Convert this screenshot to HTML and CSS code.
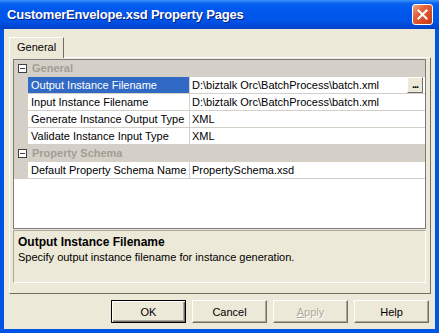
FILE: index.html
```html
<!DOCTYPE html>
<html lang="en">
<head>
    <meta charset="UTF-8">
    <title>CustomerEnvelope.xsd Property Pages</title>
    <link rel="stylesheet" href="styles.css">
</head>
<body>
    <div class="window">
        <div class="titlebar">
            <span class="title">CustomerEnvelope.xsd Property Pages</span>
            <div class="close">
                <svg viewBox="0 0 21 21" xmlns="http://www.w3.org/2000/svg">
                    <path d="M6 6L15 15M15 6L6 15" stroke="#fff" stroke-width="2.2" stroke-linecap="square"/>
                </svg>
            </div>
        </div>

        <div class="client">
            <div class="tabs">
                <div class="tab active">General</div>
            </div>

            <div class="tab-panel">
                <div class="grid">
                    <div class="row category">
                        <div class="gutter"><span class="toggle"></span></div>
                        <div class="cat-label">General</div>
                    </div>
                    <div class="row">
                        <div class="gutter"></div>
                        <div class="name selected">Output Instance Filename</div>
                        <div class="value">
                            <span>D:\biztalk Orc\BatchProcess\batch.xml</span>
                            <span class="dots">...</span>
                        </div>
                    </div>
                    <div class="row">
                        <div class="gutter"></div>
                        <div class="name">Input Instance Filename</div>
                        <div class="value">D:\biztalk Orc\BatchProcess\batch.xml</div>
                    </div>
                    <div class="row">
                        <div class="gutter"></div>
                        <div class="name">Generate Instance Output Type</div>
                        <div class="value">XML</div>
                    </div>
                    <div class="row">
                        <div class="gutter"></div>
                        <div class="name">Validate Instance Input Type</div>
                        <div class="value">XML</div>
                    </div>
                    <div class="row category">
                        <div class="gutter"><span class="toggle"></span></div>
                        <div class="cat-label">Property Schema</div>
                    </div>
                    <div class="row">
                        <div class="gutter"></div>
                        <div class="name">Default Property Schema Name</div>
                        <div class="value">PropertySchema.xsd</div>
                    </div>
                </div>

                <div class="help-box">
                    <div class="help-title">Output Instance Filename</div>
                    <div class="help-text">Specify output instance filename for instance generation.</div>
                </div>
            </div>

            <div class="buttons">
                <div class="button default">OK</div>
                <div class="button">Cancel</div>
                <div class="button disabled"><u>A</u>pply</div>
                <div class="button">Help</div>
            </div>
        </div>
    </div>
</body>
</html>
```

FILE: styles.css
```css
body {
    margin: 0;
    padding: 0;
    background: #ffffff;
}

.window {
    width: 439px;
    height: 333px;
    display: flex;
    flex-direction: column;
    background: #0055e5;
    font-family: "Liberation Sans", Arial, sans-serif;
    font-size: 11px;
    color: #000000;
}

/* Title bar */
.titlebar {
    height: 29px;
    flex: none;
    display: flex;
    align-items: center;
    justify-content: space-between;
    padding: 0 6px 0 7px;
    box-sizing: border-box;
    background: linear-gradient(#3d95ff 0%, #0a62ed 12%, #0058ee 30%, #0055e8 70%, #0048d6 90%, #003fbf 100%);
}

.title {
    color: #ffffff;
    font-weight: bold;
    font-size: 13px;
    letter-spacing: -0.2px;
    text-shadow: 1px 1px 0 #0a1e80;
}

.close {
    width: 21px;
    height: 21px;
    box-sizing: border-box;
    border: 1px solid #ffffff;
    border-radius: 3px;
    background: linear-gradient(135deg, #f0a585 0%, #e5643b 35%, #d4471f 75%, #c23a16 100%);
}

.close svg {
    display: block;
    width: 19px;
    height: 19px;
}

/* Client area */
.client {
    flex: 1;
    margin: 0 4px 4px 4px;
    padding: 8px 4px 0 5px;
    display: flex;
    flex-direction: column;
    background: #ece9d8;
}

.tabs {
    display: flex;
    height: 20px;
}

.tab {
    height: 21px;
    box-sizing: border-box;
    padding: 0 7px 0 7px;
    line-height: 19px;
    border: 1px solid;
    border-color: #ffffff #716f64 transparent #ffffff;
    border-bottom: none;
    background: #ece9d8;
    position: relative;
    z-index: 1;
}

.tab-panel {
    height: 237px;
    box-sizing: border-box;
    border: 1px solid;
    border-color: #ffffff #716f64 #716f64 #ffffff;
    padding: 1px 4px 0 3px;
}

/* Property grid */
.grid {
    height: 170px;
    box-sizing: border-box;
    border: 1px solid #7a7a7a;
    background: #ffffff;
}

.row {
    display: grid;
    grid-template-columns: 14px 162px 1fr;
    height: 17px;
}

.gutter {
    background: #d4d0c8;
    display: flex;
    align-items: center;
    justify-content: center;
}

.name,
.value {
    border-bottom: 1px solid #d4d0c8;
    line-height: 16px;
    white-space: nowrap;
    overflow: hidden;
}

.name {
    padding-left: 3px;
    border-right: 1px solid #d4d0c8;
}

.name.selected {
    background: #316ac5;
    color: #ffffff;
}

.value {
    padding-left: 2px;
    display: flex;
    justify-content: space-between;
}

.dots {
    width: 16px;
    height: 16px;
    box-sizing: border-box;
    margin-right: 2px;
    background: #ece9d8;
    border: 1px solid;
    border-color: #ffffff #716f64 #716f64 #ffffff;
    font-weight: bold;
    line-height: 12px;
    text-align: center;
    letter-spacing: -1px;
}

.category {
    background: #d4d0c8;
}

.category .cat-label {
    grid-column: 2 / 4;
    padding-left: 4px;
    line-height: 17px;
    font-weight: bold;
    color: #a29e94;
}

.toggle {
    width: 9px;
    height: 9px;
    box-sizing: border-box;
    margin-left: 3px;
    border: 1px solid #404040;
    background: linear-gradient(#404040, #404040) center / 5px 1px no-repeat #ffffff;
}

/* Description box */
.help-box {
    height: 53px;
    margin-top: 1px;
    box-sizing: border-box;
    border: 1px solid;
    border-color: #aca899 #ffffff #ffffff #aca899;
    padding: 4px 4px;
}

.help-title {
    font-weight: bold;
    font-size: 12px;
    line-height: 14px;
}

.help-text {
    margin-top: 1px;
    line-height: 14px;
}

/* Buttons */
.buttons {
    display: flex;
    justify-content: flex-end;
    gap: 6px;
    margin-top: 6px;
    padding-right: 2px;
}

.button {
    width: 75px;
    height: 23px;
    box-sizing: border-box;
    display: flex;
    align-items: center;
    justify-content: center;
    background: #ece9d8;
    border: 1px solid;
    border-color: #ffffff #716f64 #716f64 #ffffff;
    box-shadow: inset -1px -1px 0 #aca899;
}

.button.default {
    border: 1px solid #000000;
    box-shadow: inset 1px 1px 0 #ffffff, inset -1px -1px 0 #716f64, inset -2px -2px 0 #aca899;
}

.button.disabled {
    color: #aca899;
    text-shadow: 1px 1px 0 #ffffff;
}
```
